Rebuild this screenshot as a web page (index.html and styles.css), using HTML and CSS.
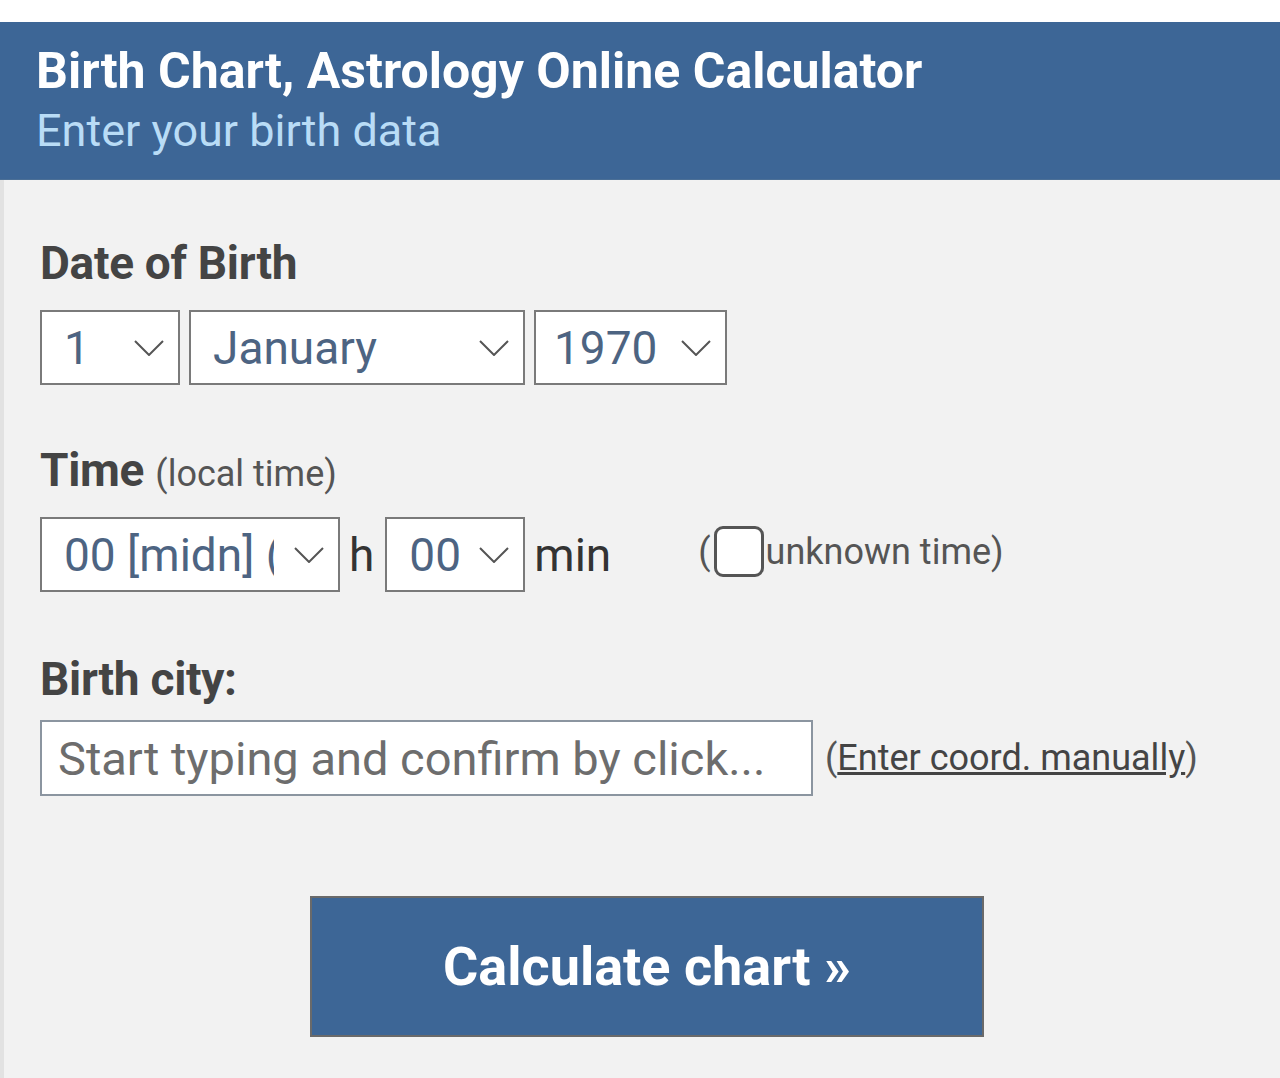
FILE: index.html
```html
<!DOCTYPE html>
<html lang="en">
<head>
<meta charset="utf-8">
<title>Birth Chart, Astrology Online Calculator</title>
<link rel="stylesheet" href="styles.css">
</head>
<body>
<div class="page">
  <header class="hero">
    <h1 class="hero-title">Birth Chart, Astrology Online Calculator</h1>
    <p class="hero-sub">Enter your birth data</p>
  </header>
  <main class="form">
    <section class="field">
      <h2 class="label">Date of Birth</h2>
      <div class="row">
        <div class="select sel-day"><span class="val">1</span><svg class="chev" viewBox="0 0 30 16"><path d="M1 1 L15 15 L29 1"/></svg></div>
        <div class="select sel-month"><span class="val">January</span><svg class="chev" viewBox="0 0 30 16"><path d="M1 1 L15 15 L29 1"/></svg></div>
        <div class="select sel-year"><span class="val">1970</span><svg class="chev" viewBox="0 0 30 16"><path d="M1 1 L15 15 L29 1"/></svg></div>
      </div>
    </section>
    <section class="field field-time">
      <h2 class="label">Time <span class="label-note">(local time)</span></h2>
      <div class="row row-time">
        <div class="select sel-hour"><span class="val clip">00 [midn] (0:00)</span><svg class="chev" viewBox="0 0 30 16"><path d="M1 1 L15 15 L29 1"/></svg></div>
        <span class="unit">h</span>
        <div class="select sel-min"><span class="val">00</span><svg class="chev" viewBox="0 0 30 16"><path d="M1 1 L15 15 L29 1"/></svg></div>
        <span class="unit">min</span>
        <label class="unknown">(<span class="checkbox"></span>unknown time)</label>
      </div>
    </section>
    <section class="field field-city">
      <h2 class="label">Birth city:</h2>
      <div class="row row-city">
        <div class="input">Start typing and confirm by click...</div>
        <span class="coord">(<a class="coord-link" href="#">Enter coord. manually</a>)</span>
      </div>
    </section>
    <div class="actions">
      <button class="btn" type="button">Calculate chart »</button>
    </div>
  </main>
</div>
</body>
</html>
```
FILE: styles.css
```css
* { box-sizing: border-box; }
html, body { margin: 0; padding: 0; }
body {
  background: #ffffff;
  font-family: Roboto, "Liberation Sans", sans-serif;
  width: 1280px;
  height: 1078px;
  overflow: hidden;
}
.page {
  padding-top: 22px;
  height: 1078px;
  display: flex;
  flex-direction: column;
}
.hero {
  background: #3d6696;
  height: 158px;
  padding: 19px 0 0 36px;
  border-bottom: 1px solid #4b6f96;
}
.hero-title {
  margin: 0;
  color: #ffffff;
  font-size: 50px;
  font-weight: 700;
  line-height: 60px;
  letter-spacing: 0;
}
.hero-sub {
  margin: 0;
  color: #b9dcf6;
  font-size: 45px;
  font-weight: 400;
  line-height: 60px;
}
.form {
  flex: 1;
  background: #f2f2f2;
  border-left: 4px solid #e2e2e2;
  padding: 56px 0 0 36px;
}
.label {
  margin: 0;
  color: #444444;
  font-size: 46px;
  font-weight: 700;
  line-height: 54px;
  letter-spacing: -0.3px;
}
.label-note {
  font-size: 36px;
  font-weight: 400;
  color: #555555;
  letter-spacing: 0;
}
.row {
  display: flex;
  align-items: center;
  gap: 9px;
  margin-top: 20px;
}
.select {
  height: 75px;
  background: #ffffff;
  border: 2px solid #7a7a7a;
  display: flex;
  align-items: center;
  padding: 0 14px 0 22px;
  color: #4d6482;
  font-size: 46px;
}
.val { flex: 1; white-space: nowrap; }
.clip { overflow: hidden; margin-right: 20px; }
.chev {
  width: 30px;
  height: 16px;
  flex: none;
  fill: none;
  stroke: #555;
  stroke-width: 2;
}
.sel-day { width: 140px; }
.sel-month { width: 336px; }
.sel-year { width: 193px; padding-left: 18px; }
.sel-hour { width: 300px; }
.sel-min { width: 140px; }
.field-time { margin-top: 58px; }
.row-time { gap: 9px; margin-top: 16px; }
.row-time .sel-min { margin-left: 2px; }
.unit { color: #333; font-size: 46px; }
.unknown {
  margin-left: 78px;
  display: flex;
  align-items: center;
  color: #555;
  font-size: 36px;
  margin-top: -6px;
}
.checkbox {
  width: 50px;
  height: 51px;
  margin: 0 2px 0 3px;
  background: #fff;
  border: 3px solid #555;
  border-radius: 9px;
}
.field-city { margin-top: 60px; }
.row-city { margin-top: 14px; gap: 12px; }
.input {
  width: 773px;
  height: 76px;
  background: #fff;
  border: 2px solid #8b95a0;
  padding: 0 16px;
  display: flex;
  align-items: center;
  color: #6d6d6d;
  font-size: 47px;
  white-space: nowrap;
}
.coord { color: #555; font-size: 36px; }
.coord-link { color: #444; text-decoration: underline; }
.actions {
  margin-top: 100px;
  padding-left: 270px;
}
.btn {
  width: 674px;
  height: 141px;
  background: #3d6696;
  border: 2px solid #6a6a6a;
  color: #fff;
  font-family: Roboto, "Liberation Sans", sans-serif;
  font-size: 54px;
  font-weight: 700;
}
```
